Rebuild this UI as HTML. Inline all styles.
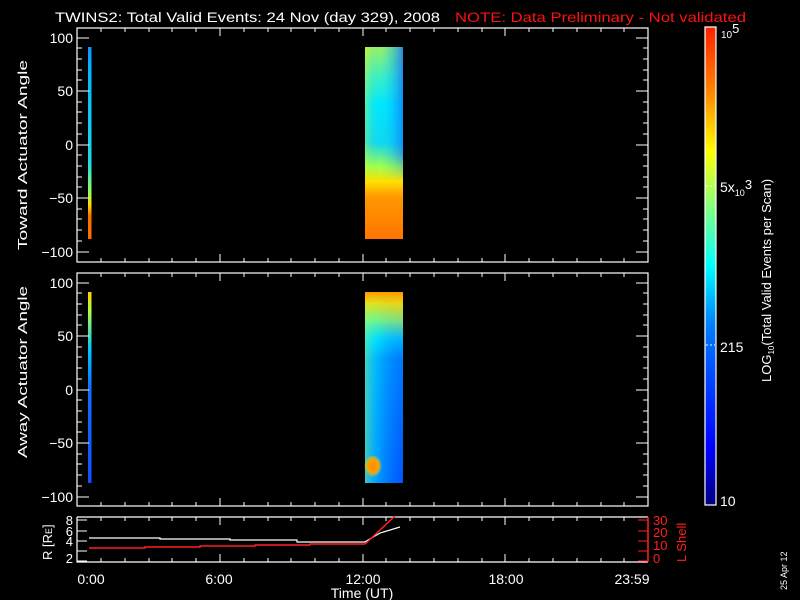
<!DOCTYPE html>
<html><head><meta charset="utf-8"><style>
html,body{margin:0;padding:0;background:#000;}
svg{display:block;font-family:"Liberation Sans","DejaVu Sans",sans-serif;}
</style></head><body>
<svg width="800" height="600" viewBox="0 0 800 600" xmlns="http://www.w3.org/2000/svg">
<defs>
<linearGradient id="cb" x1="0" y1="1" x2="0" y2="0">
<stop offset="0" stop-color="#00007f"/><stop offset="0.12" stop-color="#0000ff"/>
<stop offset="0.38" stop-color="#0080ff"/><stop offset="0.5" stop-color="#00ffff"/>
<stop offset="0.62" stop-color="#80ff80"/><stop offset="0.74" stop-color="#ffff00"/>
<stop offset="0.87" stop-color="#ff8000"/><stop offset="1" stop-color="#ff2000"/>
</linearGradient>
<linearGradient id="s1" x1="0" y1="0" x2="0" y2="1">
<stop offset="0" stop-color="#1e8cff"/><stop offset="0.1" stop-color="#00b4ff"/>
<stop offset="0.6" stop-color="#20d8e8"/><stop offset="0.75" stop-color="#90ff60"/>
<stop offset="0.82" stop-color="#ffe000"/><stop offset="0.88" stop-color="#ff7000"/>
<stop offset="1" stop-color="#ff6a00"/>
</linearGradient>
<linearGradient id="s2" x1="0" y1="0" x2="0" y2="1">
<stop offset="0" stop-color="#ffd000"/><stop offset="0.1" stop-color="#b0ff40"/>
<stop offset="0.3" stop-color="#00c8ff"/><stop offset="0.5" stop-color="#1070ff"/>
<stop offset="1" stop-color="#1050ff"/>
</linearGradient>
<linearGradient id="b1" x1="0" y1="0" x2="0" y2="1">
<stop offset="0" stop-color="#a0f060"/><stop offset="0.15" stop-color="#40f0c0"/>
<stop offset="0.3" stop-color="#00e8ff"/><stop offset="0.5" stop-color="#10d8f0"/>
<stop offset="0.62" stop-color="#a0ff50"/><stop offset="0.7" stop-color="#ffe000"/>
<stop offset="0.78" stop-color="#ff9800"/><stop offset="1" stop-color="#ff7400"/>
</linearGradient>
<linearGradient id="b1r" x1="0" y1="0" x2="1" y2="0">
<stop offset="0" stop-color="#ffff00" stop-opacity="0.35"/><stop offset="0.4" stop-color="#00e0ff" stop-opacity="0"/>
<stop offset="1" stop-color="#1060ff" stop-opacity="0.75"/>
</linearGradient>
<linearGradient id="b1m" x1="0" y1="0" x2="0" y2="1">
<stop offset="0" stop-color="#fff" stop-opacity="1"/><stop offset="0.55" stop-color="#fff" stop-opacity="0.8"/><stop offset="0.7" stop-color="#fff" stop-opacity="0"/>
</linearGradient>
<mask id="m1"><rect x="365" y="47" width="38" height="192" fill="url(#b1m)"/></mask>
<linearGradient id="b2" x1="0" y1="0" x2="0" y2="1">
<stop offset="0" stop-color="#ff9800"/><stop offset="0.06" stop-color="#ffe000"/>
<stop offset="0.15" stop-color="#a0ff60"/><stop offset="0.25" stop-color="#00e0ff"/>
<stop offset="0.35" stop-color="#0090ff"/><stop offset="1" stop-color="#0060ff"/>
</linearGradient>
<linearGradient id="b2l" x1="0" y1="0" x2="1" y2="0">
<stop offset="0" stop-color="#60f0a0" stop-opacity="0.7"/><stop offset="0.3" stop-color="#00e0ff" stop-opacity="0.5"/>
<stop offset="1" stop-color="#0040ff" stop-opacity="0.3"/>
</linearGradient>
<linearGradient id="b2m" x1="0" y1="0" x2="0" y2="1">
<stop offset="0" stop-color="#fff" stop-opacity="0"/><stop offset="0.25" stop-color="#fff" stop-opacity="1"/><stop offset="1" stop-color="#fff" stop-opacity="1"/>
</linearGradient>
<mask id="m2"><rect x="365" y="292" width="38" height="191" fill="url(#b2m)"/></mask>
<radialGradient id="blob" cx="0.5" cy="0.5" r="0.5">
<stop offset="0" stop-color="#ff8c00"/><stop offset="0.6" stop-color="#ffa000"/><stop offset="1" stop-color="#ffe000" stop-opacity="0"/>
</radialGradient>
</defs>

<!-- Title -->
<text x="55" y="22" fill="#fff" font-size="14" textLength="385" lengthAdjust="spacingAndGlyphs">TWINS2: Total Valid Events: 24 Nov (day 329), 2008</text>
<text x="455" y="22" fill="#ff1010" font-size="14" textLength="291" lengthAdjust="spacingAndGlyphs">NOTE: Data Preliminary - Not validated</text>

<!-- Panel 1 data -->
<rect x="88" y="47" width="3.5" height="192" fill="url(#s1)"/>
<rect x="365" y="47" width="38" height="192" fill="url(#b1)"/>
<rect x="365" y="47" width="38" height="192" fill="url(#b1r)" mask="url(#m1)"/>
<!-- Panel 2 data -->
<rect x="88" y="292" width="3.5" height="191" fill="url(#s2)"/>
<rect x="365" y="292" width="38" height="191" fill="url(#b2)"/>
<rect x="365" y="292" width="38" height="191" fill="url(#b2l)" mask="url(#m2)"/>
<ellipse cx="373" cy="466" rx="9" ry="11" fill="url(#blob)"/>

<g stroke="#fff" stroke-width="1.2" fill="none">
<rect x="77" y="28" width="571" height="234"/>
<rect x="77" y="273" width="571" height="233"/>
<path d="M77 517 H648 M77 517 V562 H648"/>
</g>
<path d="M648 517 V562" stroke="#ff2020" stroke-width="1.5"/>

<g stroke="#fff" stroke-width="1">
<path d="M77 38h12M77 48h5M77 59h5M77 70h5M77 80h5M77 91h12M77 102h5M77 112h5M77 123h5M77 134h5M77 145h12M77 155h5M77 166h5M77 177h5M77 187h5M77 198h12M77 209h5M77 219h5M77 230h5M77 241h5M77 252h12"/>
<path d="M648 38h-12M648 48h-5M648 59h-5M648 70h-5M648 80h-5M648 91h-12M648 102h-5M648 112h-5M648 123h-5M648 134h-5M648 145h-12M648 155h-5M648 166h-5M648 177h-5M648 187h-5M648 198h-12M648 209h-5M648 219h-5M648 230h-5M648 241h-5M648 252h-12"/>
<path d="M77 283h12M77 293h5M77 304h5M77 315h5M77 325h5M77 336h12M77 347h5M77 357h5M77 368h5M77 379h5M77 390h12M77 400h5M77 411h5M77 422h5M77 432h5M77 443h12M77 454h5M77 464h5M77 475h5M77 486h5M77 497h12"/>
<path d="M648 283h-12M648 293h-5M648 304h-5M648 315h-5M648 325h-5M648 336h-12M648 347h-5M648 357h-5M648 368h-5M648 379h-5M648 390h-12M648 400h-5M648 411h-5M648 422h-5M648 432h-5M648 443h-12M648 454h-5M648 464h-5M648 475h-5M648 486h-5M648 497h-12"/>
<path d="M101 262v-4M125 262v-4M149 262v-4M172 262v-4M196 262v-4M220 262v-8M244 262v-4M268 262v-4M291 262v-4M315 262v-4M339 262v-4M363 262v-8M386 262v-4M410 262v-4M434 262v-4M458 262v-4M482 262v-4M505 262v-8M529 262v-4M553 262v-4M577 262v-4M601 262v-4M624 262v-4"/>
<path d="M101 28v4M125 28v4M149 28v4M172 28v4M196 28v4M220 28v8M244 28v4M268 28v4M291 28v4M315 28v4M339 28v4M363 28v8M386 28v4M410 28v4M434 28v4M458 28v4M482 28v4M505 28v8M529 28v4M553 28v4M577 28v4M601 28v4M624 28v4"/>
<path d="M101 506v-4M125 506v-4M149 506v-4M172 506v-4M196 506v-4M220 506v-8M244 506v-4M268 506v-4M291 506v-4M315 506v-4M339 506v-4M363 506v-8M386 506v-4M410 506v-4M434 506v-4M458 506v-4M482 506v-4M505 506v-8M529 506v-4M553 506v-4M577 506v-4M601 506v-4M624 506v-4"/>
<path d="M101 273v4M125 273v4M149 273v4M172 273v4M196 273v4M220 273v8M244 273v4M268 273v4M291 273v4M315 273v4M339 273v4M363 273v8M386 273v4M410 273v4M434 273v4M458 273v4M482 273v4M505 273v8M529 273v4M553 273v4M577 273v4M601 273v4M624 273v4"/>
<path d="M101 562v-4M125 562v-4M149 562v-4M172 562v-4M196 562v-4M220 562v-8M244 562v-4M268 562v-4M291 562v-4M315 562v-4M339 562v-4M363 562v-8M386 562v-4M410 562v-4M434 562v-4M458 562v-4M482 562v-4M505 562v-8M529 562v-4M553 562v-4M577 562v-4M601 562v-4M624 562v-4"/>
<path d="M101 517v4M125 517v4M149 517v4M172 517v4M196 517v4M220 517v8M244 517v4M268 517v4M291 517v4M315 517v4M339 517v4M363 517v8M386 517v4M410 517v4M434 517v4M458 517v4M482 517v4M505 517v8M529 517v4M553 517v4M577 517v4M601 517v4M624 517v4"/>
<path d="M77 520h10M77 531h10M77 541h10M77 551h10M77 561h10"/>
</g>
<g stroke="#ff2020" stroke-width="1"><path d="M648 520h-10M648 531h-10M648 541h-10M648 551h-10M648 561h-10"/></g>

<g fill="#fff" font-size="14" text-anchor="end">
<text x="73" y="43">100</text><text x="73" y="96">50</text><text x="73" y="150">0</text><text x="73" y="203">−50</text><text x="73" y="257">−100</text>
<text x="73" y="288">100</text><text x="73" y="341">50</text><text x="73" y="395">0</text><text x="73" y="448">−50</text><text x="73" y="502">−100</text>
<text x="73" y="525" font-size="13">8</text><text x="73" y="536" font-size="13">6</text><text x="73" y="546" font-size="13">4</text><text x="73" y="563" font-size="13">2</text>
</g>
<g fill="#ff2020" font-size="13">
<text x="653" y="525">30</text><text x="653" y="537">20</text><text x="653" y="550">10</text><text x="653" y="563">0</text>
<text transform="translate(686,562) rotate(-90)" font-size="13">L Shell</text>
</g>
<text transform="translate(27,250) rotate(-90)" fill="#fff" font-size="13" textLength="190" lengthAdjust="spacingAndGlyphs">Toward Actuator Angle</text>
<text transform="translate(27,458) rotate(-90)" fill="#fff" font-size="13" textLength="172" lengthAdjust="spacingAndGlyphs">Away Actuator Angle</text>
<text transform="translate(52,560) rotate(-90)" fill="#fff" font-size="13">R [R<tspan font-size="9">E</tspan>]</text>

<polyline points="89,538 160,538 160,539 230,539 230,540 297,540 297,542 365,542 368,540 380,533 400,527" fill="none" stroke="#fff" stroke-width="1.2"/>
<polyline points="89,548 145,548 145,547 200,547 200,546 255,546 255,545 310,545 310,544 365,544 395,516" fill="none" stroke="#ff2020" stroke-width="1.5"/>

<g fill="#fff" font-size="14" text-anchor="middle">
<text x="91" y="584">0:00</text><text x="219" y="584">6:00</text><text x="363" y="584">12:00</text><text x="506" y="584">18:00</text><text x="632" y="584">23:59</text>
<text x="362" y="598">Time (UT)</text>
</g>

<rect x="705" y="27" width="11" height="478" fill="url(#cb)" stroke="#fff" stroke-width="1.2"/>
<path d="M706 186h9M706 345h9" stroke="#fff" stroke-dasharray="2,2"/>
<g fill="#fff" font-size="14">
<text x="721" y="38" font-size="10">10<tspan dy="-5" font-size="13">5</tspan></text>
<text x="720" y="192">5x<tspan font-size="9" dy="4">10</tspan><tspan dy="-7" font-size="13">3</tspan></text>
<text x="720" y="352">215</text>
<text x="720" y="506">10</text>
</g>
<text transform="translate(771,382) rotate(-90)" fill="#fff" font-size="13">LOG<tspan font-size="8" dy="3">10</tspan><tspan dy="-3">(Total Valid Events per Scan)</tspan></text>
<text transform="translate(787,590) rotate(-90)" fill="#fff" font-size="9">25 Apr 12</text>
</svg>
</body></html>
